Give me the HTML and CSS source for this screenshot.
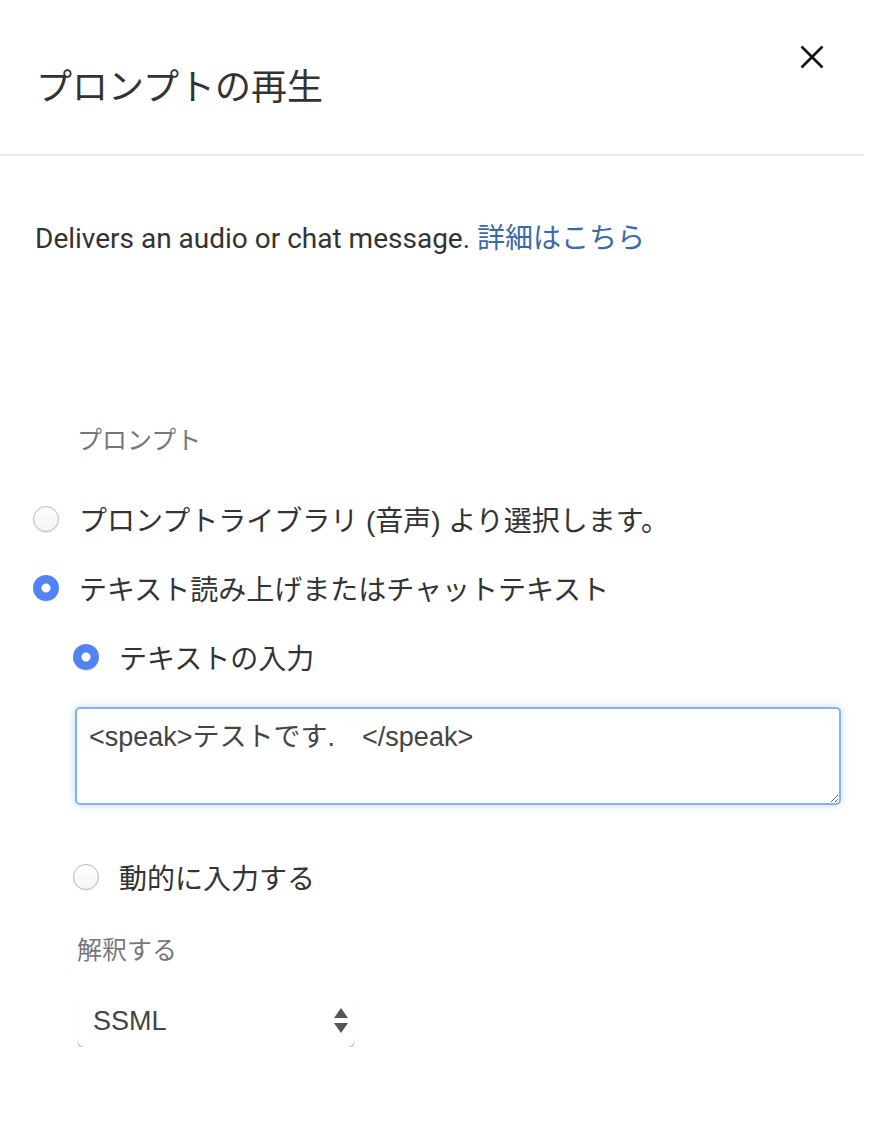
FILE: index.html
```html
<!DOCTYPE html>
<html lang="ja">
<head>
    <meta charset="UTF-8">
    <meta name="viewport" content="width=device-width, initial-scale=1.0">
    <title>プロンプトの再生</title>
    <link rel="stylesheet" href="styles.css">
</head>
<body>
    <div class="modal-header">
        <h1 class="modal-title">プロンプトの再生</h1>
        <button class="close-btn" aria-label="閉じる">
            <svg width="24" height="24" viewBox="0 0 24 24">
                <path d="M1.5 1.5 L22.5 22.5 M22.5 1.5 L1.5 22.5" stroke="#111" stroke-width="2.6" fill="none"/>
            </svg>
        </button>
    </div>

    <div class="modal-body">
        <p class="description">Delivers an audio or chat message. <a href="#" class="more-link">詳細はこちら</a></p>

        <div class="field">
            <div class="field-label">プロンプト</div>

            <label class="radio-row">
                <input type="radio" name="prompt" class="radio">
                <span>プロンプトライブラリ (音声) より選択します。</span>
            </label>
            <label class="radio-row">
                <input type="radio" name="prompt" class="radio" checked>
                <span>テキスト読み上げまたはチャットテキスト</span>
            </label>

            <div class="sub-options">
                <label class="radio-row">
                    <input type="radio" name="source" class="radio" checked>
                    <span>テキストの入力</span>
                </label>
                <textarea class="text-input">&lt;speak&gt;テストです.　&lt;/speak&gt;</textarea>

                <label class="radio-row dynamic">
                    <input type="radio" name="source" class="radio">
                    <span>動的に入力する</span>
                </label>

                <div class="field-label interpret">解釈する</div>
                <div class="select-box">
                    <span>SSML</span>
                    <svg width="14" height="26" viewBox="0 0 14 26">
                        <path d="M7 0 L14 10 L0 10 Z M0 15 L14 15 L7 25 Z" fill="#555"/>
                    </svg>
                </div>
            </div>
        </div>
    </div>
</body>
</html>
```

FILE: styles.css
```css
body {
    margin: 0;
    font-family: Roboto, "Noto Sans CJK JP", sans-serif;
    color: #333;
    background: #fff;
}

.modal-header {
    display: flex;
    justify-content: space-between;
    align-items: flex-start;
    height: 154px;
    margin-right: 24px;
    border-bottom: 2px solid #eceded;
}

.modal-title {
    margin: 62px 0 0 36px;
    font-family: "Noto Sans CJK JP", sans-serif;
    font-size: 36px;
    font-weight: 400;
    line-height: 44px;
    color: #333;
}

.close-btn {
    margin: 45px 40px 0 0;
    padding: 0;
    background: none;
    border: none;
    cursor: pointer;
}

.modal-body {
    padding: 0 0 0 35px;
}

.description {
    margin: 62px 0 0 0;
    font-size: 28px;
    line-height: 36px;
    color: #333;
}

.more-link {
    color: #3b6aa6;
    text-decoration: none;
    font-family: "Noto Sans CJK JP", sans-serif;
    font-size: 28px;
}

.field {
    margin-top: 164px;
}

.field-label {
    margin-left: 42px;
    font-family: "Noto Sans CJK JP", sans-serif;
    font-size: 25px;
    line-height: 34px;
    color: #777;
}

.radio-row {
    display: flex;
    align-items: center;
    gap: 20px;
    height: 40px;
    margin-top: 29px;
    font-family: "Liberation Sans", "Noto Sans CJK JP", sans-serif;
    font-size: 28px;
    color: #333;
}

.field-label + .radio-row {
    margin-top: 44px;
}

.radio {
    appearance: none;
    -webkit-appearance: none;
    flex: none;
    width: 26px;
    height: 26px;
    margin: 0 0 0 -2px;
    border: 1px solid #b9b9b9;
    border-radius: 50%;
    background: linear-gradient(#fff, #f4f4f4);
    box-shadow: 0 1px 1px rgba(0, 0, 0, 0.08);
}

.radio:checked {
    border: none;
    background: radial-gradient(circle, #fff 0 4px, #5283f4 5px);
}

.sub-options {
    padding-left: 40px;
}

.text-input {
    display: block;
    box-sizing: border-box;
    width: 766px;
    height: 98px;
    margin-top: 30px;
    padding: 11px 12px 8px;
    border: 2px solid #86b0f4;
    border-radius: 5px;
    box-shadow: 0 0 8px rgba(120, 165, 240, 0.45);
    outline: none;
    resize: vertical;
    font-family: "Liberation Sans", "Noto Sans CJK JP", sans-serif;
    font-size: 27px;
    line-height: 34px;
    color: #444;
}

.radio-row.dynamic {
    margin-top: 52px;
}

.field-label.interpret {
    margin: 34px 0 0 2px;
}

.select-box {
    display: flex;
    justify-content: space-between;
    align-items: center;
    box-sizing: border-box;
    width: 278px;
    height: 52px;
    margin: 30px 0 0 2px;
    padding: 0 7px 0 16px;
    border-radius: 8px;
    box-shadow: 0 1px 1px rgba(0, 0, 0, 0.08), 0 2px 0 #cfcfcf;
    font-family: "Liberation Sans", sans-serif;
    font-size: 27px;
    color: #444;
}
```
